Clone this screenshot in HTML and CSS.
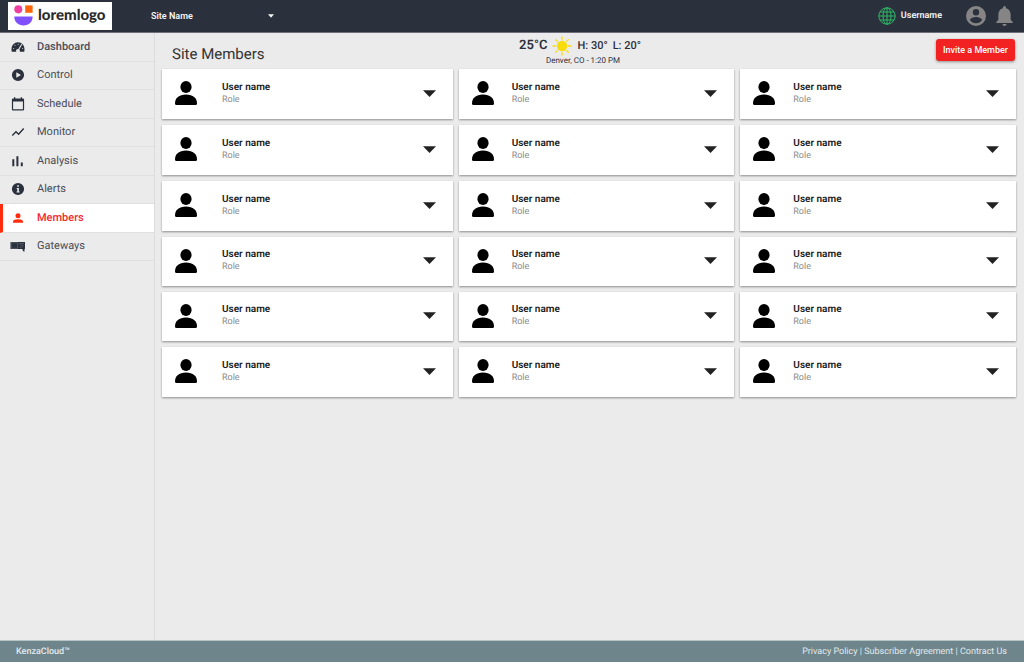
FILE: index.html
```html
<!DOCTYPE html>
<html lang="en">
<head>
<meta charset="utf-8">
<meta name="viewport" content="width=device-width, initial-scale=1">
<title>Site Members</title>
<link rel="stylesheet" href="styles.css">
</head>
<body>
<svg class="defs" aria-hidden="true">
  <symbol id="person" viewBox="0 0 22 24"><ellipse cx="11" cy="6.100" rx="5.600" ry="6"/><path d="M0 22.500C0 17 4 13.500 11 13.500S22 17 22 22.500Q22 24 20.500 24H1.500Q0 24 0 22.500Z"/></symbol>
</svg>
<header class="topbar">
  <a class="logo" href="#" aria-label="loremlogo home">
    <svg class="logo-mark" viewBox="0 0 19 21" aria-hidden="true"><ellipse cx="4.300" cy="4.300" rx="4" ry="4.100" fill="#ec3fa0"/><rect x="11.200" y=".4" width="7.400" height="7.400" fill="#ff6408"/><path d="M.3 11.500H18.600C18.600 17 15 20.500 9.500 20.500S.3 17 .3 11.500Z" fill="#8050ff"/></svg>
    <span>loremlogo</span>
  </a>
  <button class="site-picker" type="button"><span>Site Name</span><svg viewBox="0 0 6 4" aria-hidden="true"><path d="M0 .3H6L3 3.700Z"/></svg></button>
  <div class="account">
    <svg class="globe" viewBox="0 0 18 18" aria-hidden="true"><circle cx="9" cy="9" r="8.200"/><ellipse cx="9" cy="9" rx="4" ry="8.200"/><path d="M9 .8V17.200M.8 9H17.200M2 5H16M2 13H16"/></svg>
    <span class="username">Username</span>
    <button class="icon-button" type="button" aria-label="Profile"><svg class="profile" viewBox="2 2 20 20"><path fill-rule="evenodd" d="M12 2a10 10 0 1 0 0 20 10 10 0 0 0 0-20Zm0 3a3.200 3.200 0 1 1 0 6.400A3.200 3.200 0 0 1 12 5Zm0 14.200a7.200 7.200 0 0 1-6-3.220c.03-2 4-3.080 6-3.080s5.970 1.090 6 3.080a7.200 7.200 0 0 1-6 3.220Z"/></svg></button>
    <button class="icon-button" type="button" aria-label="Notifications"><svg class="bell" viewBox="4 2.500 16 19.500"><path d="M12 22a2 2 0 0 0 2-2h-4a2 2 0 0 0 2 2Zm6-6v-5c0-3.070-1.640-5.640-4.500-6.320V4a1.500 1.500 0 0 0-3 0v.68C7.630 5.360 6 7.920 6 11v5l-2 2v1h16v-1l-2-2Z"/></svg></button>
  </div>
</header>
<div class="shell">
  <nav class="sidebar" aria-label="Main">
    <div class="nav-list">
      <a class="nav-item strong" href="#"><svg viewBox="0 0 14 14" aria-hidden="true"><path d="M.8 11.800C-.5 6.500 2.500 2.300 7 2.300S14.500 6.500 13.200 11.800H8.700Q9.200 10.500 8.300 9.600L11.200 4.600 10.300 4.100 7.300 9.100C5.400 9 4.700 10.400 5.300 11.800Z"/><g fill="#ebebeb"><circle cx="2.600" cy="8.500" r=".5"/><circle cx="4" cy="5.300" r=".5"/><circle cx="7.200" cy="4.200" r=".5"/><circle cx="11.600" cy="8.500" r=".5"/></g></svg><span>Dashboard</span></a>
      <a class="nav-item" href="#"><svg viewBox="0 0 14 14" aria-hidden="true"><path fill-rule="evenodd" d="M7 .9a6.100 6.100 0 1 0 0 12.200A6.100 6.100 0 0 0 7 .9ZM5.300 4.200 10 7 5.300 9.800Z"/></svg><span>Control</span></a>
      <a class="nav-item" href="#"><svg viewBox="0 0 14 14" aria-hidden="true"><path fill-rule="evenodd" d="M3 .2H4.300V1.400H9.700V.2H11V1.400H12Q13.100 1.400 13.100 2.500V12.400Q13.100 13.500 12 13.500H2Q.9 13.500.9 12.400V2.500Q.9 1.400 2 1.400H3ZM2.100 4.500V12.300H11.900V4.500Z"/></svg><span>Schedule</span></a>
      <a class="nav-item" href="#"><svg viewBox="0 0 14 14" aria-hidden="true"><path class="line" d="M1.300 10.500 5 6.700 7.600 9.200 12.700 3.500"/></svg><span>Monitor</span></a>
      <a class="nav-item" href="#"><svg viewBox="0 0 14 14" aria-hidden="true"><path d="M1.300 5.200H3.300V12.200H1.300ZM5.400 2.200H7.400V12.200H5.400ZM9.800 8.500H11.800V12.200H9.800Z"/></svg><span>Analysis</span></a>
      <a class="nav-item" href="#"><svg viewBox="0 0 14 14" aria-hidden="true"><path fill-rule="evenodd" d="M7 .9a6.100 6.100 0 1 0 0 12.200A6.100 6.100 0 0 0 7 .9ZM6.200 3.200H7.900V4.700H6.200ZM5.700 5.900H7.900V9.600H8.600V10.600H5.500V9.600H6.300V6.900H5.700Z"/></svg><span>Alerts</span></a>
      <a class="nav-item active" href="#" aria-current="page"><svg viewBox="0 0 14 14" aria-hidden="true"><circle cx="7" cy="4.700" r="2.500"/><path d="M2 11.800V10.500C2 8.900 5 8.200 7 8.200S12 8.900 12 10.500V11.800Z"/></svg><span>Members</span></a>
      <a class="nav-item" href="#"><svg class="wide" viewBox="0 0 16 12" aria-hidden="true"><path d="M.5 2H15V9H.5Z"/><path d="M12.500 9H14.500V11.500H13.500L12.500 10Z"/><path d="M1.200 2.700H7.600V8.300H1.200ZM8.800 3.500H14M9.500 7.500H11.500M10 5H12.500V7" fill="none" stroke="#777b83" stroke-width=".5"/></svg><span>Gateways</span></a>
    </div>
  </nav>
  <main class="content">
    <div class="page-head">
      <h1>Site Members</h1>
      <section class="weather" aria-label="Weather">
        <div class="conditions"><strong>25°C</strong>
          <svg viewBox="0 0 20 20" aria-hidden="true"><circle cx="10" cy="10" r="4.600"/><path d="M10 1V3.600M10 16.400V19M1 10H3.600M16.400 10H19M3.600 3.600 5.400 5.400M14.600 14.600 16.400 16.400M3.600 16.400 5.400 14.600M14.600 5.400 16.400 3.600"/></svg>
          <span>H: 30°</span><span>L: 20°</span></div>
        <div class="place">Denver, CO - 1:20 PM</div>
      </section>
      <button class="invite" type="button">Invite a Member</button>
    </div>
    <div class="members" id="members"></div>
  </main>
</div>
<footer class="footer">
  <span class="brand">KenzaCloud™</span>
  <div class="legal"><a href="#">Privacy Policy</a> | <a href="#">Subscriber Agreement</a> | <a href="#">Contract Us</a></div>
</footer>
<script src="members.js"></script>
</body>
</html>
```
FILE: styles.css
```css
* { box-sizing: border-box; }

body {
  margin: 0;
  min-height: 100vh;
  display: flex;
  flex-direction: column;
  background: #ebebeb;
  color: #2b2f3b;
  font-family: Roboto, "Liberation Sans", sans-serif;
  font-size: 11px;
  text-rendering: geometricPrecision;
}

a { color: inherit; text-decoration: none; }
button { border: 0; padding: 0; background: none; color: inherit; font: inherit; cursor: pointer; }
svg { display: block; flex: none; fill: currentColor; }
.defs { position: absolute; width: 0; height: 0; }

.topbar {
  height: 33px;
  display: flex;
  align-items: center;
  padding: 0 11px 0 8px;
  background: #2b303d;
  border-bottom: 1px solid #6d707c;
  color: #f5f5f5;
}

.logo {
  width: 104px;
  height: 28px;
  display: flex;
  align-items: center;
  gap: 5px;
  padding: 0 0 2px 6px;
  background: #fff;
  color: #292929;
  font: 900 15px/20px Lato, sans-serif;
}

.logo-mark { width: 19px; height: 21px; }

.site-picker {
  width: 123px;
  margin-left: 39px;
  display: flex;
  align-items: center;
  justify-content: space-between;
  font-size: 9px;
  font-weight: 600;
}

.site-picker svg { width: 6px; height: 4px; }

.account { margin-left: auto; display: flex; align-items: center; }
.globe { width: 18px; height: 18px; fill: none; stroke: #2eb866; stroke-width: 1; }
.username { margin: 0 24px 0 5px; font-size: 9px; font-weight: 600; line-height: 14px; }
.icon-button { color: #858585; }
.icon-button + .icon-button { margin-left: 10px; }
.profile { width: 20px; height: 20px; }
.bell { width: 17px; height: 20px; }

.shell { flex: 1; display: flex; }

.sidebar { width: 155px; flex: none; border-right: 1px solid #dcdcdc; }
.nav-list { min-height: 228px; display: grid; grid-auto-rows: 1fr; }

.nav-item {
  display: flex;
  align-items: center;
  gap: 12px;
  padding-left: 11px;
  border-bottom: 1px solid #e0e0e0;
  color: #4a4d57;
  font-size: 11px;
  line-height: 20px;
}

.nav-item svg { width: 14px; height: 14px; color: #2b303d; }
.nav-item .wide { width: 16px; height: 12px; margin: 0 -1px; }
.nav-item .line { fill: none; stroke: currentColor; stroke-width: 1.4; }
.nav-item.strong { font-weight: 500; }

.nav-item.active {
  padding-left: 8px;
  border-left: 3px solid #ff2d0d;
  background: #fff;
  color: #f5282d;
  font-weight: 500;
}

.nav-item.active svg { color: #ff2d0d; }

.content { flex: 1; min-width: 0; padding: 0 8px 0 7px; }

.page-head { height: 36px; display: grid; grid-template-columns: 358fr auto 376fr; }

.page-head h1 {
  margin: 8px 0 0 10px;
  color: #333;
  font-size: 15px;
  font-weight: 400;
  line-height: 26px;
}

.weather { text-align: center; }
.conditions { display: flex; align-items: center; gap: 5px; padding-top: 3px; font-size: 11px; font-weight: 500; line-height: 20px; }
.conditions strong { font-size: 13px; font-weight: 600; }
.conditions svg { width: 20px; height: 20px; fill: #f9dc0c; stroke: #f9dc0c; stroke-width: 1.3; stroke-linecap: round; }
.place { padding-left: 6px; font-size: 8px; line-height: 9px; }

.invite {
  width: 79px;
  height: 22px;
  margin: 6px 1px 0 0;
  justify-self: end;
  border-radius: 3px;
  background: #f22222;
  box-shadow: 0 1px 3px rgba(0, 0, 0, .4);
  color: #fff;
  font-size: 9px;
  font-weight: 500;
}

.members {
  display: grid;
  grid-template-columns: 291fr 276fr 276fr;
  grid-template-rows: 50px 50px 50px 49px 49px 50px;
  gap: 6px;
}

.card {
  display: flex;
  align-items: center;
  padding: 0 17px 2px 13px;
  background: #fff;
  box-shadow: 0 1px 2px rgba(0, 0, 0, .4);
}

.card .avatar { width: 22px; height: 24px; color: #000; }
.card .details { flex: 1; margin-left: 18px; }
.card:nth-child(3n + 1) .details { margin-left: 25px; }
.card h2 { margin: 0; color: #202020; font-size: 10px; font-weight: 600; line-height: 13px; }
.card p { margin: 0; color: #8c8c8c; font-size: 9px; line-height: 12px; }
.card .chevron { width: 13px; height: 7px; color: #222; }

.footer {
  min-height: 22px;
  display: flex;
  align-items: center;
  justify-content: space-between;
  padding: 0 17px 0 16px;
  border-top: 1px solid #b5c4c4;
  background: #6e858b;
  color: #e2e8ea;
  font-size: 9px;
}

.brand { font-weight: 500; }
```
FILE: members.js
```js
const members = Array.from({ length: 18 }, () => ({ name: "User name", role: "Role" }));

document.getElementById("members").innerHTML = members.map(({ name, role }) => `
  <article class="card">
    <svg class="avatar" aria-hidden="true"><use href="#person"/></svg>
    <div class="details"><h2>${name}</h2><p>${role}</p></div>
    <button type="button" aria-label="Show member details"><svg class="chevron" viewBox="0 0 13 7"><path d="M0 .3H13L6.500 7Z"/></svg></button>
  </article>`).join("");
```
